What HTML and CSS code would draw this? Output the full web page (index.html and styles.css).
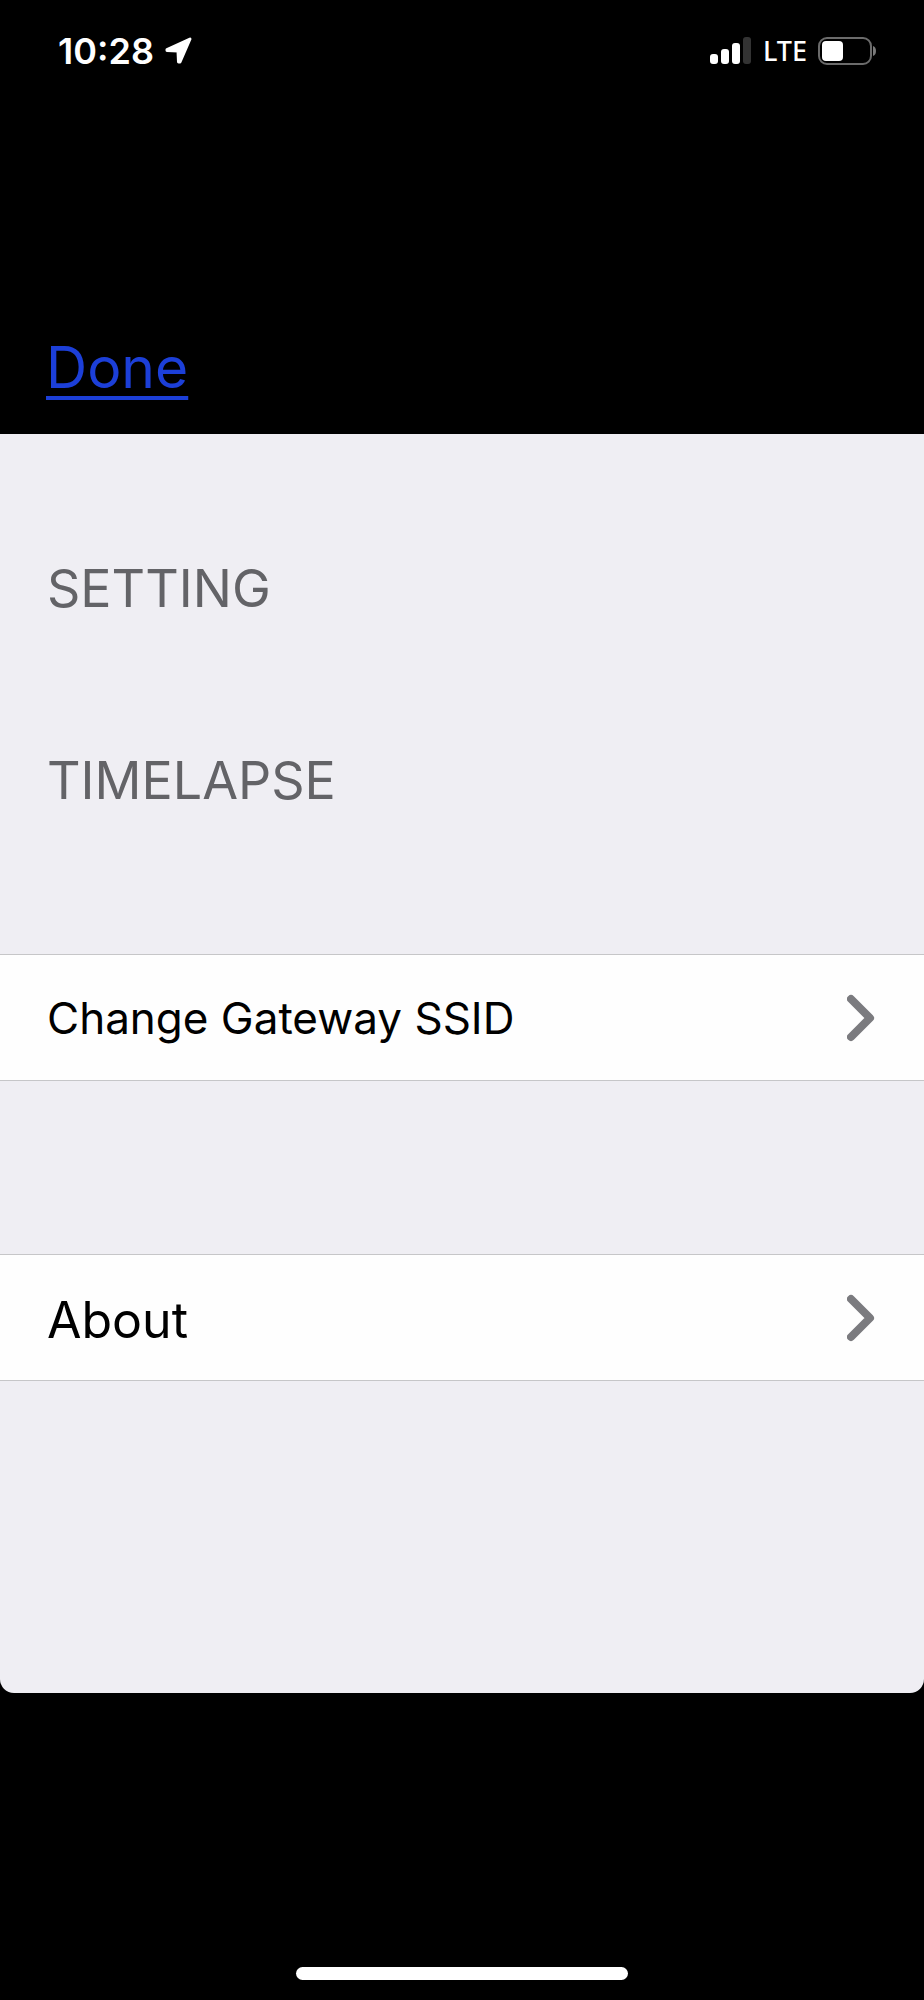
FILE: index.html
```html
<!DOCTYPE html>
<html lang="en">
<head>
    <meta charset="UTF-8">
    <meta name="viewport" content="width=device-width, initial-scale=1.0">
    <title>Setting</title>
    <link rel="stylesheet" href="styles.css">
</head>
<body>
    <!-- Status bar -->
    <div class="status-bar">
        <div class="status-left">
            <span class="clock">10:28</span>
            <svg class="location-icon" width="30" height="30" viewBox="0 0 30 30">
                <path d="M26 3 L16 26 L14.500 26 L14 15 L3 14.500 L3 13.500 Z" fill="#fff" stroke="#fff" stroke-width="3" stroke-linejoin="round"/>
            </svg>
        </div>
        <div class="status-right">
            <svg width="42" height="28" viewBox="0 0 42 28">
                <rect x="0" y="17" width="8" height="10" rx="3" fill="#fff"/>
                <rect x="11" y="12" width="8" height="15" rx="3" fill="#fff"/>
                <rect x="22" y="6" width="8" height="21" rx="3" fill="#fff"/>
                <rect x="33" y="0" width="8" height="27" rx="3" fill="#333"/>
            </svg>
            <span class="network">LTE</span>
            <svg width="59" height="28" viewBox="0 0 59 28">
                <rect x="1" y="1" width="52" height="26" rx="8" fill="none" stroke="#6b6b6b" stroke-width="2"/>
                <rect x="4" y="4" width="21" height="20" rx="4" fill="#fff"/>
                <path d="M55 9 Q58 10 58 14 Q58 18 55 19 Z" fill="#7a7a7a"/>
            </svg>
        </div>
    </div>

    <nav class="nav-bar">
        <a class="done" href="#">Done</a>
    </nav>

    <!-- Settings list -->
    <main class="settings">
        <h1 class="section-title">SETTING</h1>
        <h2 class="section-title">TIMELAPSE</h2>

        <a class="row" href="#">
            <span class="row-label">Change Gateway SSID</span>
            <svg class="chevron" width="28" height="48" viewBox="0 0 28 48">
                <path d="M4 5 L23 24 L4 43" fill="none" stroke="#7b7b7f" stroke-width="8" stroke-linecap="round" stroke-linejoin="round"/>
            </svg>
        </a>

        <a class="row" href="#">
            <span class="row-label row-label-large">About</span>
            <svg class="chevron" width="28" height="48" viewBox="0 0 28 48">
                <path d="M4 5 L23 24 L4 43" fill="none" stroke="#7b7b7f" stroke-width="8" stroke-linecap="round" stroke-linejoin="round"/>
            </svg>
        </a>
    </main>

    <footer class="home-area">
        <div class="home-indicator"></div>
    </footer>
</body>
</html>
```
FILE: styles.css
```css
body {
    font-family: Inter, "Liberation Sans", sans-serif;
    background-color: #000;
    margin: 0;
    min-height: 100vh;
    display: flex;
    flex-direction: column;
}

.status-bar {
    display: flex;
    justify-content: space-between;
    align-items: center;
    height: 102px;
    padding: 0 47px 0 58px;
    color: #fff;
}

.status-left,
.status-right {
    display: flex;
    align-items: center;
}

.status-left {
    gap: 10px;
}

.status-right {
    gap: 11px;
}

.clock {
    font-size: 36px;
    font-weight: 600;
    line-height: 48px;
}

.network {
    font-family: "Noto Sans", sans-serif;
    font-size: 27px;
    font-weight: 500;
    line-height: 32px;
}

.nav-bar {
    display: flex;
    align-items: flex-end;
    height: 298px;
    padding: 0 46px 34px;
}

.done {
    color: #1c3fd8;
    font-size: 57px;
    line-height: 64px;
    text-decoration: underline;
    text-decoration-thickness: 4px;
    text-underline-offset: 8px;
    text-decoration-skip-ink: none;
}

.settings {
    background-color: #efeef3;
    border-radius: 0 0 14px 14px;
    padding: 123px 0 312px;
}

.section-title {
    color: #636367;
    font-size: 52px;
    font-weight: 400;
    line-height: 64px;
    margin: 0 47px 128px;
}

.row {
    display: flex;
    justify-content: space-between;
    align-items: center;
    height: 125px;
    padding: 0 49px 0 47px;
    border-top: 1px solid #c6c6c8;
    border-bottom: 1px solid #c6c6c8;
    background-color: #fefefe;
    color: #000;
    text-decoration: none;
}

.section-title + .row {
    margin-top: 141px;
}

.row + .row {
    margin-top: 173px;
}

.row-label {
    font-size: 44px;
    line-height: 60px;
}

.row-label-large {
    font-size: 50px;
    padding-top: 4px;
}

.home-area {
    display: flex;
    justify-content: center;
    margin-top: auto;
    padding-bottom: 20px;
}

.home-indicator {
    width: 36%;
    height: 13px;
    border-radius: 7px;
    background-color: #fff;
}
```
